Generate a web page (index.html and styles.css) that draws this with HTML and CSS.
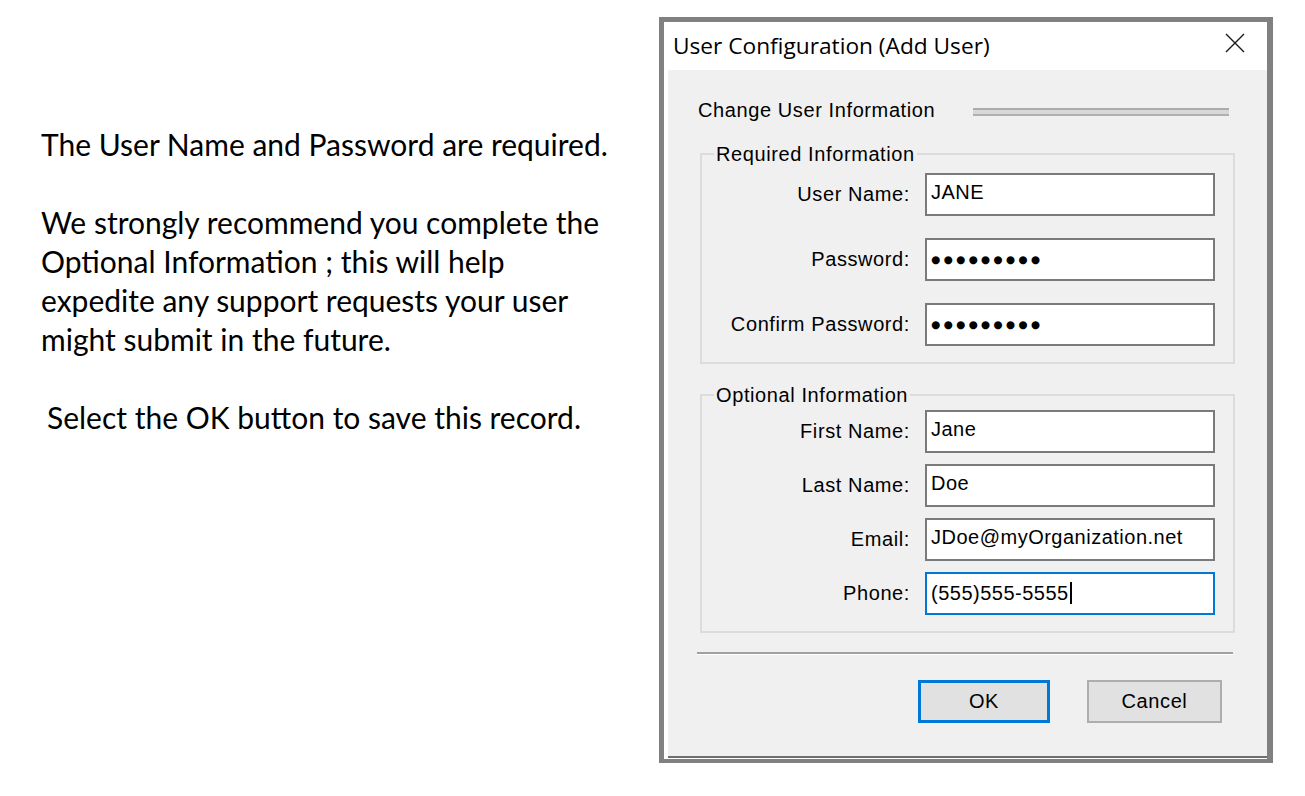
FILE: index.html
```html
<!DOCTYPE html>
<html lang="en">
<head>
<meta charset="utf-8">
<title>User Configuration (Add User)</title>
<link rel="stylesheet" href="styles.css">
</head>
<body>
<div class="page">
  <div class="instructions">
    <p>The User Name and Password are required.</p>
    <p>We strongly recommend you complete the<br>Optional Information ; this will help<br>expedite any support requests your user<br>might submit in the future.</p>
    <p class="indent">Select the OK button to save this record.</p>
  </div>
  <div class="window">
    <div class="titlebar">
      <span class="title">User Configuration (Add User)</span>
      <svg class="close" width="20" height="20" viewBox="0 0 20 20"><path d="M1 1 L19 19 M19 1 L1 19" stroke="#1a1a1a" stroke-width="1.4" fill="none"/></svg>
    </div>
    <div class="frame">
      <div class="body">
        <div class="section-head">
          <span class="section-title">Change User Information</span>
          <div class="etched"></div>
        </div>
        <div class="group group-required">
          <div class="legend">Required Information</div>
          <div class="rows rows-wide">
            <div class="row"><span class="label">User Name:</span><div class="field">JANE</div></div>
            <div class="row"><span class="label">Password:</span><div class="field pw">●●●●●●●●●</div></div>
            <div class="row"><span class="label">Confirm Password:</span><div class="field pw">●●●●●●●●●</div></div>
          </div>
        </div>
        <div class="group group-optional">
          <div class="legend">Optional Information</div>
          <div class="rows rows-tight">
            <div class="row"><span class="label">First Name:</span><div class="field">Jane</div></div>
            <div class="row"><span class="label">Last Name:</span><div class="field">Doe</div></div>
            <div class="row"><span class="label">Email:</span><div class="field">JDoe@myOrganization.net</div></div>
            <div class="row"><span class="label">Phone:</span><div class="field focused"><span class="caret">(555)555-5555</span></div></div>
          </div>
        </div>
        <div class="sep"></div>
        <div class="buttons">
          <div class="btn btn-default">OK</div>
          <div class="btn">Cancel</div>
        </div>
      </div>
    </div>
  </div>
</div>
</body>
</html>
```
FILE: styles.css
```css
* { box-sizing: border-box; }
html, body { margin: 0; padding: 0; background: #ffffff; }
body { width: 1305px; height: 796px; overflow: hidden; }

.page {
  display: flex;
  align-items: flex-start;
  padding-top: 17px;
}

.instructions {
  flex: 0 0 618px;
  margin-left: 41px;
  padding-top: 108px;
  font-family: Lato, "Open Sans", sans-serif;
  font-size: 30px;
  line-height: 39px;
  color: #000;
  white-space: nowrap;
}
.instructions p { margin: 0 0 39px 0; }
.instructions .indent { padding-left: 6px; }

.window {
  width: 614px;
  height: 746px;
  border: 5px solid #808080;
  border-right-width: 6px;
  border-bottom-width: 4px;
  background: #ffffff;
  display: flex;
  flex-direction: column;
}

.titlebar {
  height: 48px;
  flex: 0 0 48px;
  display: flex;
  align-items: center;
  justify-content: space-between;
  padding: 0 18px 2px 9px;
  background: #ffffff;
}
.title {
  font-family: "Open Sans", "Noto Sans", sans-serif;
  font-size: 22.7px;
  color: #000;
}
.close { display: block; margin-top: -4px; margin-right: 4px; }

.frame {
  flex: 1;
  padding: 0 0 1px 4px;
  background: #ffffff;
  display: flex;
}
.body {
  flex: 1;
  background: #f0f0f0;
  border-bottom: 2px solid #6e6e6e;
  font-family: "Liberation Sans", Arial, sans-serif;
  font-size: 20px;
  letter-spacing: 0.6px;
  color: #000;
  padding: 28px 32px 0 32px;
}

.section-head {
  display: flex;
  align-items: center;
  height: 24px;
  margin-left: -2px;
  margin-right: 6px;
}
.section-title { line-height: 24px; }
.etched {
  flex: 1;
  margin-left: 38px;
  margin-top: 4px;
  height: 8px;
  background: #d8d8d8;
  border-top: 2px solid #acacac;
  border-bottom: 2px solid #b0b0b0;
}

.group {
  border: 2px solid #dcdcdc;
  padding: 0 18px 16px 0;
}
.group-required { margin-top: 31px; }
.group-optional { margin-top: 30px; }

.legend {
  width: fit-content;
  margin: -13px 0 0 12px;
  padding: 0 2px;
  line-height: 24px;
  background: #f0f0f0;
}

.rows { display: flex; flex-direction: column; }
.rows-wide { gap: 22px; margin-top: 7px; }
.rows-tight { gap: 11px; margin-top: 3px; }

.row {
  display: flex;
  align-items: center;
  gap: 15px;
}
.label {
  flex: 0 0 208px;
  text-align: right;
  white-space: nowrap;
}
.field {
  flex: 0 0 290px;
  height: 43px;
  border: 2px solid #7a7a7a;
  background: #ffffff;
  padding: 0 4px;
  line-height: 34px;
  white-space: nowrap;
  letter-spacing: 0.5px;
}
.field.pw {
  font-family: "DejaVu Sans", sans-serif;
  font-size: 10.5px;
  letter-spacing: 3.3px;
  line-height: 39px;
}
.field.focused { border-color: #0078d7; line-height: 38px; }
.caret {
  border-right: 2px solid #000;
  padding-right: 1px;
}

.sep {
  margin: 19px 2px 0 -3px;
  height: 3px;
  border-top: 2px solid #a0a0a0;
  border-bottom: 1px solid #ffffff;
}

.buttons {
  display: flex;
  justify-content: flex-end;
  gap: 37px;
  margin-top: 25px;
  margin-right: 13px;
}
.btn {
  width: 135px;
  height: 43px;
  background: #e1e1e1;
  border: 2px solid #adadad;
  display: flex;
  align-items: center;
  justify-content: center;
}
.btn-default {
  width: 132px;
  border: 3px solid #0078d7;
}
```
